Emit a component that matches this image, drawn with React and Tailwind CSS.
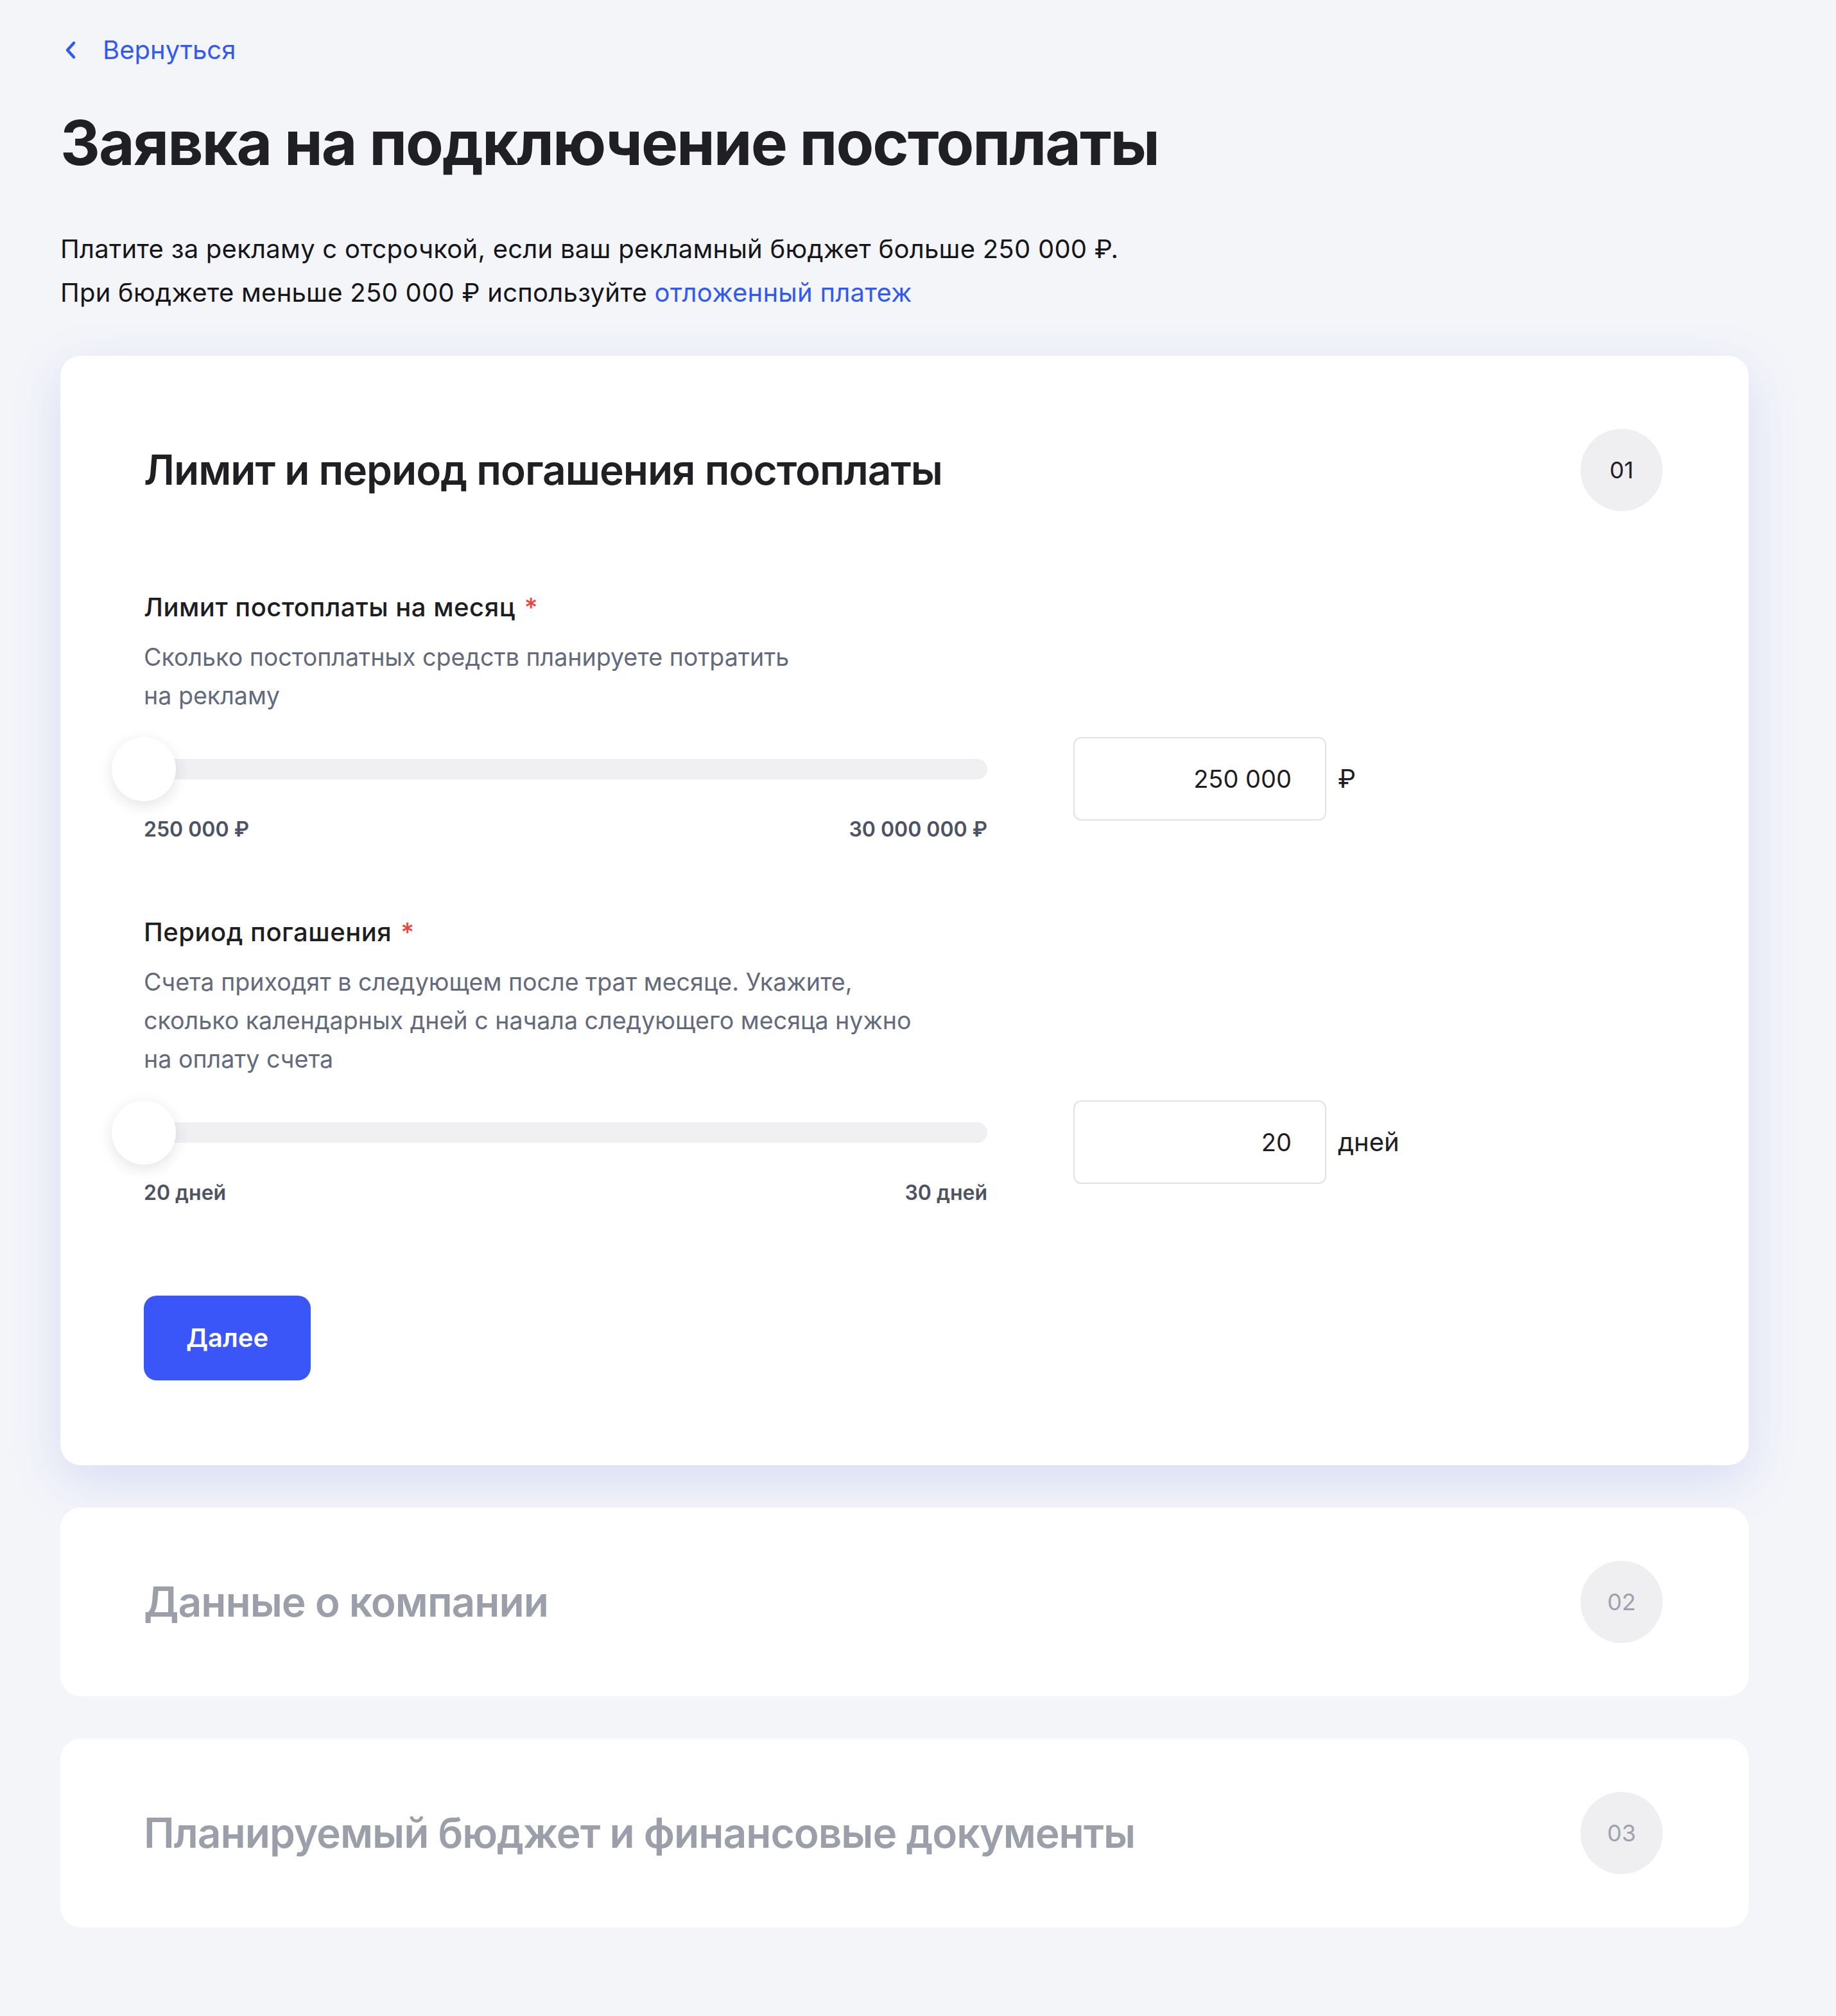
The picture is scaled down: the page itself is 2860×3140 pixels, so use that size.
import React from "react";

const font = "font-['Inter','Noto_Sans',sans-serif]";

function StepBadge({ num, active }) {
  return (
    <div
      className={`flex size-[128px] shrink-0 items-center justify-center rounded-full bg-[#efeff2] text-[36px] ${
        active ? "text-[#222226]" : "text-[#9ea2ac]"
      }`}
    >
      {num}
    </div>
  );
}

function RangeField({ label, hint, min, max, value, unit }) {
  return (
    <div>
      <div className="text-[40px] leading-[56px] font-medium tracking-[0.5px] text-[#1d1d22]">
        {label}
        <span className="ml-[14px] text-[#f0443a]">*</span>
      </div>
      <p className="mt-[20px] text-[37.6px] leading-[60px] text-[#636a7b]">{hint}</p>
      <div className="mt-[34px] flex items-start">
        <div className="w-[1314px] shrink-0">
          <div className="relative flex h-[100px] items-center">
            <div className="h-[32px] w-full rounded-full bg-[#f0f0f3]" />
            <div className="absolute left-[-50px] top-0 size-[100px] rounded-full bg-white shadow-[0_6px_22px_rgba(30,35,60,0.12)]" />
          </div>
          <div className="mt-[22px] flex justify-between text-[32px] leading-[44px] font-semibold text-[#4d5363]">
            <span>{min}</span>
            <span>{max}</span>
          </div>
        </div>
        <div className="ml-[134px] flex items-center">
          <div className="flex h-[130px] w-[394px] items-center justify-end rounded-[12px] border-2 border-[#e1e2e8] bg-white pr-[52px] text-[38px] text-[#1d1d22]">
            {value}
          </div>
          <span className="ml-[18px] text-[40px] text-[#1d1d22]">{unit}</span>
        </div>
      </div>
    </div>
  );
}

function CollapsedStep({ title, num }) {
  return (
    <section className="mt-[66px] flex items-center justify-between rounded-[32px] bg-white pl-[130px] pr-[134px] py-[83px]">
      <h2 className="text-[64px] leading-[80px] font-semibold tracking-[-1px] text-[#9a9faa]">{title}</h2>
      <StepBadge num={num} />
    </section>
  );
}

export default function App() {
  return (
    <div className={`min-h-screen bg-[#f4f5f9] ${font} text-[#1d1d22]`}>
      <div className="pl-[94px] pr-[136px] pt-[50px] pb-[140px]">
        <a href="#" className="flex items-center text-[40px] leading-[56px] text-[#3159f6]">
          <svg width="20" height="30" viewBox="0 0 20 30" fill="none" className="ml-[6px]">
            <path d="M15 4L5 15L15 26" stroke="#3159f6" strokeWidth="4.5" strokeLinecap="round" strokeLinejoin="round" />
          </svg>
          <span className="ml-[40px]">Вернуться</span>
        </a>

        <h1 className="mt-[60px] text-[96px] leading-[112px] font-bold tracking-[-2px] text-[#1f1f24]">
          Заявка на подключение постоплаты
        </h1>

        <p className="mt-[76px] text-[40px] leading-[68px] tracking-[0.25px] text-[#16161a]">
          Платите за рекламу с отсрочкой, если ваш рекламный бюджет больше 250 000 ₽.
          <br />
          При бюджете меньше 250 000 ₽ используйте{" "}
          <a href="#" className="text-[#3159f6]">
            отложенный платеж
          </a>
        </p>

        {/* step 1 — expanded */}
        <section className="mt-[64px] rounded-[32px] bg-white pl-[130px] pr-[134px] pt-[114px] pb-[132px] shadow-[0_24px_80px_rgba(72,96,230,0.16)]">
          <div className="flex items-center justify-between">
            <h2 className="text-[64px] leading-[80px] font-semibold tracking-[-1px] text-[#1f1f24]">
              Лимит и период погашения постоплаты
            </h2>
            <StepBadge num="01" active />
          </div>

          <div className="mt-[122px]">
            <RangeField
              label="Лимит постоплаты на месяц"
              hint={
                <>
                  Сколько постоплатных средств планируете потратить
                  <br />
                  на рекламу
                </>
              }
              min="250 000 ₽"
              max="30 000 000 ₽"
              value="250 000"
              unit="₽"
            />
          </div>

          <div className="mt-[110px]">
            <RangeField
              label="Период погашения"
              hint={
                <>
                  Счета приходят в следующем после трат месяце. Укажите,
                  <br />
                  сколько календарных дней с начала следующего месяца нужно
                  <br />
                  на оплату счета
                </>
              }
              min="20 дней"
              max="30 дней"
              value="20"
              unit="дней"
            />
          </div>

          <button className="mt-[138px] h-[132px] w-[260px] rounded-[20px] bg-[#3a55f8] text-[40px] font-semibold text-white">
            Далее
          </button>
        </section>

        <CollapsedStep title="Данные о компании" num="02" />
        <CollapsedStep title="Планируемый бюджет и финансовые документы" num="03" />
      </div>
    </div>
  );
}
